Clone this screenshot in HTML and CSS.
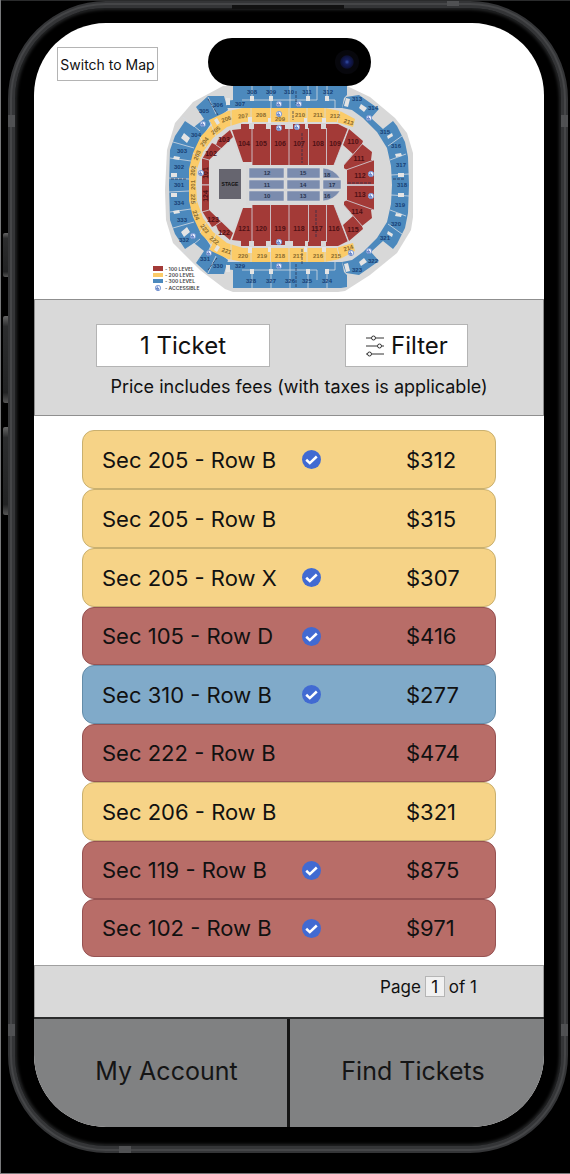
FILE: index.html
```html
<!DOCTYPE html>
<html lang="en">
<head>
<meta charset="utf-8">
<meta name="viewport" content="width=device-width, initial-scale=1">
<title>Tickets</title>
<link rel="stylesheet" href="styles.css">
</head>
<body>
<div class="phone">
  <i class="key key-action"></i><i class="key key-up"></i><i class="key key-down"></i>
  <i class="band band-lt"></i><i class="band band-lb"></i><i class="band band-rt"></i><i class="band band-rb"></i><i class="band band-t"></i><i class="band band-b"></i>
  <i class="speaker"></i>
  <main class="screen">
    <section class="venue">
      <div class="topbar">
        <button class="box switch" type="button">Switch to Map</button>
        <div class="island"><span class="lens"></span></div>
      </div>
      <svg class="map" viewBox="149 86 280 213" role="img" aria-label="Seating map">
        <defs>
          <g id="blue">
            <path d="M233 84H347V95L344 98 342 108H227L226 101 233 100Z"/>
            <path d="M169 185 170 150 175 136 185 121 194 127 204 119 196 107 208 96 224 96 228 110 212 122 202 137 194 153 190 169 189 185Z"/>
            <path d="M342 108 346 97 359 95 379 109 371 118 383 129 393 121 397 126 405 142 408 157 409 185H392L391 166 387 148 377 132 363 118 352 110Z"/>
          </g>
          <g id="half">
            <use href="#blue" fill="#4c89bd"/>
            <path fill="#fbcb68" d="M355 119 340 111 325 108H243L228 111 209 120 212 125 201 136 193 153 189 169V185H196L197 169 203 152 213 138 227 127 243 122H336L353 127Z"/>
            <path fill="#a33a37" d="M232 130 241 129V124H249V129H254V124H266V129H271V125H285V129H293V124H305V129H308V124H321V129H326V124H338L348 129 334 165H252V162H243Z"/>
            <path fill="#a33a37" d="M349 129 363 141 362 144 372 152 371 160 374 160V185H347V170L342 167 353 154 343 145Z"/>
            <path fill="#a33a37" d="M202 185V159L212 143 216 145 218 140 230 130 233 137 209 160V185Z"/>
            <path fill="#dadada" d="M210 185V161L232 140 243 163H252V185Z"/>
            <path class="seam" d="M252 124V165M270.500 128V165M289 128V165M308.500 128V165M326.500 128V165M348 129 334 165M363 143 342 167M374 160 346 170M346 184.500H374M216 145 222 149M209 160 202 158M202 185H209"/>
            <path class="seam" d="M242 100H252V84M252 100H271V84M271 100V108M271 100H290M290 84V108M290 100H308V84M308 100H317V84M327 84V100H335V108M183 117 200 131M173 142 194 148M170 158 191 161M169 178 189 179M208 97 216 114M388 146 402 136M390 160 406 154M391 175 409 174"/>
            <path class="seam" d="M231 110V126M251 108V122M270.500 108V122M289 108V122M307 108V122M325 108V122M340 111 337 123M209 120 216 136M200 137 206 147M193 153 201 158M190 168H197"/>
            <path class="notch" d="M250 96h4v5h-4zM269 96h4v5h-4zM306 96h4v5h-4zM325 96h4v5h-4zM346 98l4 1-2 8-4-1zM361 104l6 4-3 4-5-4zM184 133l6 5-3 5-6-5zM174 156l6 1-1 3-6-1zM171 173h6v4h-6zM387 136l5-3 1 3-5 3zM395 154l6-1 1 3-6 1zM398 173h6v4h-6zM226 98h4v7h-4z"/>
            <path class="notch" d="M248 117h4v6h-4zM322 118h4v5h-4zM268 118h3v5h-3zM304 118h3v5h-3zM217 118l3 5-3 2-3-5z"/>
          </g>
          <g id="access"><circle r="2.700" fill="#e8eefb" stroke="#6f8fd0" stroke-width=".8"/><path d="M-.7-1.600V.6H1M-1.300 0A1.300 1.300 0 1 0 1 1.300" fill="none" stroke="#3e62b5" stroke-width=".8"/></g>
        </defs>
        <path fill="#d8d8d8" d="M223 86H347L370 97 395 118 407 133 413 153V217L411 230 397 253 370 275 345 291 338 292H233L225 289 200 270 173 243 166 220 165 190 167 150 175 123 193 102Z"/>
        <use href="#half"/>
        <use href="#half" transform="matrix(1 0 0 -1 0 370)"/>
        <path fill="#4c89bd" d="M233 280H347V287L341 288H233Z"/>
        <path class="seam" d="M252 280V288M271 280V288M290 280V288M308 280V288M327 280V288"/>
        <rect x="219" y="169" width="22" height="30" fill="#66656f"/>
        <g fill="#7b8cae" stroke="#e2e2e2">
          <rect x="246" y="165" width="98" height="40" fill="#d8d8d8" stroke="none"/>
          <path d="M249 168h35v10h-35zM249 180h35v9h-35zM249 191h35v10h-35zM287 168h33v10h-33zM287 180h33v9h-33zM287 191h33v10h-33zM323 168q11 1 17 10h-17zM323 180h18v9h-18zM323 191h17q-6 9-17 10z" stroke-width=".5"/>
        </g>
        <path d="M302 133V163M302 264V248M316 210V238M348 183H372M171 179H187M393 179H405M208 99 218 115M296 91V104M293 111V120M296 264V287M208 270 217 258" fill="none" stroke="#222b4a" stroke-width=".7" stroke-dasharray="3 1"/>
        <g class="n n-blue">
          <text x="252" y="94">308</text><text x="271" y="94">309</text><text x="289" y="94">310</text><text x="307" y="94">311</text><text x="328" y="94">312</text>
          <text x="240" y="106">307</text><text x="218" y="107">306</text><text x="204" y="113">305</text><text x="196" y="137">304</text><text x="182" y="153">303</text><text x="179" y="169">302</text><text x="179" y="187">301</text><text x="179" y="205">334</text><text x="182" y="222">333</text><text x="184" y="242">332</text><text x="205" y="261">331</text><text x="218" y="268">330</text><text x="240" y="268">329</text>
          <text x="251" y="283">328</text><text x="271" y="283">327</text><text x="290" y="283">326</text><text x="307" y="283">325</text><text x="327" y="283">324</text><text x="357" y="272">323</text><text x="373" y="263">322</text><text x="385" y="240">321</text><text x="396" y="226">320</text><text x="400" y="207">319</text><text x="402" y="187">318</text><text x="401" y="167">317</text><text x="396" y="148">316</text><text x="385" y="134">315</text><text x="373" y="110">314</text><text x="357" y="101">313</text>
        </g>
        <g class="n n-gold">
          <text x="243" y="118" transform="rotate(-5 243 115)">207</text><text x="261" y="117">208</text><text x="280" y="121">209</text><text x="300" y="117">210</text><text x="318" y="117">211</text><text x="335" y="118">212</text><text transform="translate(348 124) rotate(18)">213</text>
          <text transform="translate(227 121) rotate(-20)">206</text><text transform="translate(217 132) rotate(-38)">205</text><text transform="translate(206 143) rotate(-52)">204</text><text transform="translate(199 156) rotate(-68)">203</text><text transform="translate(195 171) rotate(-84)">202</text><text transform="translate(195 185) rotate(-90)">201</text><text transform="translate(191 199) rotate(86)">225</text><text transform="translate(194 216) rotate(68)">224</text><text transform="translate(203 230) rotate(52)">223</text><text transform="translate(213 242) rotate(38)">222</text><text transform="translate(226 253) rotate(18)">221</text>
          <text x="243" y="258">220</text><text x="262" y="258">219</text><text x="280" y="258">218</text><text x="298" y="258">217</text><text x="318" y="258">216</text><text x="336" y="258">215</text><text transform="translate(349 250) rotate(-18)">214</text>
        </g>
        <g class="n n-red">
          <text x="244" y="146">104</text><text x="261" y="146">105</text><text x="280" y="146">106</text><text x="299" y="146">107</text><text x="318" y="146">108</text><text x="335" y="146">109</text><text x="353" y="144">110</text><text x="359" y="161">111</text><text x="360" y="178">112</text><text x="360" y="197">113</text><text x="357" y="214">114</text><text x="353" y="232">115</text><text x="334" y="231">116</text><text x="317" y="231">117</text><text x="299" y="231">118</text><text x="280" y="231">119</text><text x="261" y="231">120</text><text x="244" y="231">121</text><text x="224" y="235">122</text><text x="213" y="222">123</text><text x="211" y="156">102</text><text x="224" y="142">103</text>
          <text transform="translate(208 173) rotate(-90)">101</text><text transform="translate(208 196) rotate(-90)">124</text>
        </g>
        <g class="n n-floor">
          <text x="267" y="175">12</text><text x="267" y="187">11</text><text x="267" y="198">10</text><text x="303" y="175">15</text><text x="303" y="187">14</text><text x="303" y="198">13</text><text x="327" y="177">18</text><text x="332" y="187">17</text><text x="327" y="198">16</text><text class="stage" x="230" y="186">STAGE</text>
        </g>
        <use href="#access" x="203" y="124"/><use href="#access" x="279" y="104"/><use href="#access" x="279" y="114"/><use href="#access" x="279" y="128"/><use href="#access" x="201" y="173"/><use href="#access" x="299" y="104"/><use href="#access" x="297" y="127"/><use href="#access" x="369" y="118"/><use href="#access" x="371" y="174"/><use href="#access" x="371" y="196"/><use href="#access" x="351" y="253"/><use href="#access" x="369" y="251"/><use href="#access" x="193" y="236"/><use href="#access" x="209" y="253"/><use href="#access" x="279" y="242"/><use href="#access" x="279" y="266"/><use href="#access" x="158" y="288"/>
        <path fill="#a33a37" d="M153 266h10v5h-10z"/><path fill="#fbcb68" d="M153 273h10v4h-10z"/><path fill="#4c89bd" d="M153 279h10v4h-10z"/>
        <g class="legend"><text x="165" y="271">- 100 LEVEL</text><text x="165" y="277">- 200 LEVEL</text><text x="165" y="283">- 300 LEVEL</text><text x="165" y="290">- ACCESSIBLE</text></g>
      </svg>
    </section>

    <section class="panel">
      <div class="controls">
        <button class="box count" type="button">1 Ticket</button>
        <button class="box filter" type="button">
          <svg class="sliders" viewBox="0 0 20 22" aria-hidden="true"><path d="M1 3H6.500M10.500 3H19M1 11H12.500M16.500 11H19M6.500 19H19M1 19H2.500"/><circle cx="8.500" cy="3" r="2"/><circle cx="14.500" cy="11" r="2"/><circle cx="4.500" cy="19" r="2"/></svg>
          Filter
        </button>
      </div>
      <p class="note">Price includes fees (with taxes is applicable)</p>
    </section>

    <svg class="sprite" aria-hidden="true"><symbol id="check" viewBox="0 0 18 18"><circle cx="9" cy="9" r="9" fill="#416ad2"/><path d="M4 9.200 7.400 12.400 14 6.200" fill="none" stroke="#fff" stroke-width="2.400"/></symbol></svg>
    <ul class="tickets">
      <li class="ticket gold"><span>Sec 205 - Row B</span><svg class="check"><use href="#check"/></svg><span class="price">$312</span></li>
      <li class="ticket gold"><span>Sec 205 - Row B</span><span class="price">$315</span></li>
      <li class="ticket gold"><span>Sec 205 - Row X</span><svg class="check"><use href="#check"/></svg><span class="price">$307</span></li>
      <li class="ticket red"><span>Sec 105 - Row D</span><svg class="check"><use href="#check"/></svg><span class="price">$416</span></li>
      <li class="ticket blue"><span>Sec 310 - Row B</span><svg class="check"><use href="#check"/></svg><span class="price">$277</span></li>
      <li class="ticket red"><span>Sec 222 - Row B</span><span class="price">$474</span></li>
      <li class="ticket gold"><span>Sec 206 - Row B</span><span class="price">$321</span></li>
      <li class="ticket red"><span>Sec 119 - Row B</span><svg class="check"><use href="#check"/></svg><span class="price">$875</span></li>
      <li class="ticket red"><span>Sec 102 - Row B</span><svg class="check"><use href="#check"/></svg><span class="price">$971</span></li>
    </ul>

    <div class="pager"><label for="page">Page</label><input id="page" type="text" value="1"><span>of 1</span></div>
    <nav class="tabs"><a href="#account">My Account</a><a href="#find">Find Tickets</a></nav>
  </main>
</div>
</body>
</html>
```
FILE: styles.css
```css
* { box-sizing: border-box; }
body {
  margin: 0;
  min-height: 100vh;
  padding: 1px 2px 20px 8px;
  background: #000;
  border-bottom: 2px solid #77787a;
  box-shadow: inset 1px 0 #77787a, inset 0 1px #2a2b2c;
  font-family: Inter, "Liberation Sans", sans-serif;
  color: #111;
}
button, input { font: inherit; color: inherit; }
.phone {
  position: relative;
  padding: 15px 17px 19px 19px;
  border: 7px solid #343537;
  border-radius: 98px;
  background: #000;
  box-shadow: inset 0 0 0 1px #1c1d1e, inset 0 0 3px 2px #242526;
}
.phone::before {
  content: "";
  position: absolute;
  inset: -5px;
  border: 2px solid #454648;
  border-radius: 96px;
  pointer-events: none;
}
.key {
  position: absolute;
  left: -12px;
  width: 5px;
  border-radius: 2px 0 0 2px;
  background: linear-gradient(#666 0, #2c2d2e 12%, #222324 88%, #555 100%);
}
.key-action { top: 225px; height: 44px; }
.key-up { top: 308px; height: 87px; }
.key-down { top: 419px; height: 88px; }
.band { position: absolute; width: 7px; height: 12px; background: #505153; }
.band-lt, .band-lb { left: -7px; }
.band-rt, .band-rb { right: -7px; }
.band-lt, .band-rt { top: 107px; }
.band-lb, .band-rb { bottom: 110px; }
.band-t, .band-b { width: 12px; height: 7px; }
.band-t { top: -7px; right: 102px; height: 5px; }
.band-b { bottom: -7px; left: 104px; }
.speaker {
  position: absolute;
  top: -3px;
  left: 50%;
  width: 112px;
  height: 4px;
  margin-left: -56px;
  background: #111;
}
.screen {
  overflow: hidden;
  border-radius: 72px;
  background: #fff;
}
.venue { padding-top: 15px; }
.topbar {
  display: grid;
  grid-template-columns: 1fr auto 1fr;
  align-items: start;
}
.box {
  padding: 0;
  border: 1px solid #b4b4b4;
  background: #fff;
  white-space: nowrap;
}
.switch {
  width: 101px;
  height: 34px;
  margin: 9px 0 0 23px;
  font-size: 14px;
}
.island {
  display: flex;
  align-items: center;
  justify-content: flex-end;
  width: 163px;
  height: 48px;
  padding-right: 12px;
  border-radius: 24px;
  background: #000;
}
.lens {
  width: 24px;
  height: 24px;
  border-radius: 50%;
  background: radial-gradient(circle, #3450a8 0, #141d5c 14%, #0d1136 36%, #07070c 42%, #07070c 100%);
}
.map { display: block; width: 280px; max-width: 100%; margin: 0 auto; }
.seam { fill: none; stroke: #d5dbe2; stroke-width: 1; opacity: .8; }
.notch { fill: #e4e4e4; }
.n { font-family: "Liberation Sans", sans-serif; font-size: 6px; font-weight: 700; text-anchor: middle; }
.n-blue { fill: #173f74; }
.n-gold { fill: #8a6a2c; }
.n.n-red { fill: #4f1115; font-size: 7px; }
.n-floor { fill: #27344f; }
.n .stage { font-size: 5px; fill: #111; }
.legend { font-size: 5px; font-weight: 600; fill: #444; }
.panel {
  padding: 24px 0 16px;
  border: 1px solid #8f8f8f;
  background: #d9d9d9;
}
.controls { display: flex; justify-content: space-between; padding: 0 75px 0 61px; }
.count, .filter { height: 43px; font-size: 24px; }
.count { width: 174px; }
.filter {
  display: flex;
  align-items: center;
  justify-content: center;
  gap: 6px;
  width: 123px;
}
.sliders { width: 20px; height: 22px; fill: none; stroke: #333; stroke-width: 1; }
.note {
  margin: 8px 0 0 20px;
  font-size: 18px;
  line-height: 24px;
  text-align: center;
  white-space: nowrap;
}
.sprite { position: absolute; width: 0; height: 0; }
.tickets { margin: 0; padding: 14px 48px 8px; list-style: none; }
.ticket {
  display: grid;
  grid-template-columns: 200fr 104fr 89fr;
  align-items: center;
  height: 59px;
  padding-left: 19px;
  border: 1px solid;
  border-radius: 12px;
  font-size: 22px;
}
.gold { border-color: #c9b06f; background: #f6d387; }
.red { height: 58px; border-color: #965252; background: #b86d68; }
.blue { border-color: #648ca8; background: #80aac9; }
.check { width: 19px; height: 19px; }
.price { grid-column: 3; }
.pager {
  display: flex;
  justify-content: flex-end;
  align-items: center;
  gap: 4px;
  padding: 10px 66px 20px 0;
  border: 1px solid #a0a0a0;
  border-bottom: 0;
  background: #d9d9d9;
  font-size: 17px;
}
.pager input {
  width: 20px;
  height: 21px;
  padding: 0;
  border: 1px solid #b5b5b5;
  background: #f1f1f1;
  text-align: center;
}
.tabs { display: grid; grid-template-columns: 253fr 257fr; border-top: 2px solid #2b2c2c; }
.tabs a {
  padding: 36px 0 40px 12px;
  background: #808182;
  color: #151515;
  font-size: 25px;
  line-height: 32px;
  text-align: center;
  text-decoration: none;
}
.tabs a + a { padding-left: 0; padding-right: 8px; border-left: 3px solid #151515; }
```
